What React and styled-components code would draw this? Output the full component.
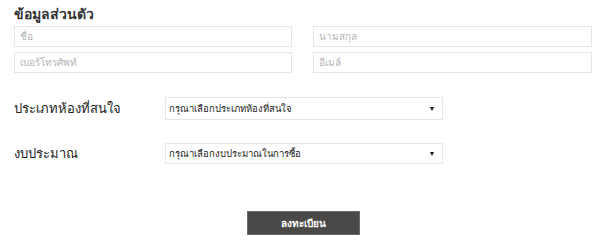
import React from "react";
import styled, { createGlobalStyle } from "styled-components";

const Global = createGlobalStyle`
  body {
    margin: 0;
    background: #fff;
    font-family: Tahoma, "DejaVu Sans", "Noto Sans", sans-serif;
  }
`;

const Form = styled.form`
  width: 578px;
  padding: 6px 0 0 14px;
`;

const Heading = styled.h3`
  margin: 0 0 3px;
  font-size: 14px;
  font-weight: bold;
  color: #333;
  line-height: 17px;
`;

const Grid = styled.div`
  display: grid;
  grid-template-columns: 278px 279px;
  column-gap: 21px;
  row-gap: 5px;
`;

const Input = styled.input`
  box-sizing: border-box;
  height: 21px;
  border: 1px solid #e6e6e6;
  padding: 0 5px;
  font-family: inherit;
  font-size: 10px;
  outline: none;
  &::placeholder {
    color: #b5b5b5;
  }
`;

const Row = styled.div`
  display: flex;
  align-items: center;
  margin-top: ${(p) => p.$top}px;
`;

const Label = styled.label`
  width: 151px;
  font-size: 13px;
  color: #222;
`;

const SelectBox = styled.div`
  box-sizing: border-box;
  width: 278px;
  height: ${(p) => p.$h}px;
  border: 1px solid #e6e6e6;
  display: flex;
  align-items: center;
  justify-content: space-between;
  padding: 0 6px 0 3px;
  font-size: 9.5px;
  color: #222;
`;

const Arrow = styled.span`
  width: 0;
  height: 0;
  border-left: 2.5px solid transparent;
  border-right: 2.5px solid transparent;
  border-top: 4px solid #111;
  margin-right: 2px;
`;

const ButtonRow = styled.div`
  display: flex;
  justify-content: center;
  margin-top: 47px;
`;

const Button = styled.button`
  width: 113px;
  height: 24px;
  background: #4a4947;
  border: 1px solid #6d6d6b;
  color: #fff;
  font-family: inherit;
  font-size: 10px;
  font-weight: bold;
`;

const Select = ({ text, h }) => (
  <SelectBox $h={h}>
    <span>{text}</span>
    <Arrow />
  </SelectBox>
);

export default function App() {
  return (
    <>
      <Global />
      <Form>
        <Heading>ข้อมูลส่วนตัว</Heading>
        <Grid>
          <Input placeholder="ชื่อ" />
          <Input placeholder="นามสกุล" />
          <Input placeholder="เบอร์โทรศัพท์" />
          <Input placeholder="อีเมล์" />
        </Grid>
        <Row $top={24}>
          <Label>ประเภทห้องที่สนใจ</Label>
          <Select h={23} text="กรุณาเลือกประเภทห้องที่สนใจ" />
        </Row>
        <Row $top={23}>
          <Label>งบประมาณ</Label>
          <Select h={21} text="กรุณาเลือกงบประมาณในการซื้อ" />
        </Row>
        <ButtonRow>
          <Button type="button">ลงทะเบียน</Button>
        </ButtonRow>
      </Form>
    </>
  );
}
